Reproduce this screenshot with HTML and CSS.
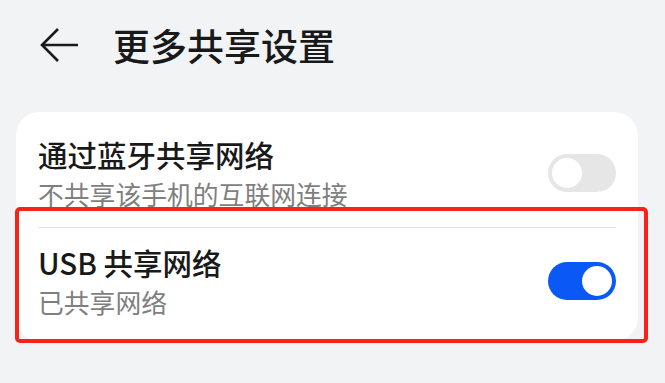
FILE: index.html
```html
<!DOCTYPE html>
<html lang="zh-CN">
<head>
    <meta charset="UTF-8">
    <title>更多共享设置</title>
    <link rel="stylesheet" href="styles.css">
</head>
<body>

<div class="header">
    <svg class="back" width="38" height="36" viewBox="0 0 38 36">
        <path d="M18 2 L2 18 L18 34 M2 18 H38" fill="none" stroke="#1a1a1a" stroke-width="2.6" stroke-linejoin="miter"/>
    </svg>
    <h1 class="title">更多共享设置</h1>
</div>

<div class="card">
    <div class="row first">
        <div class="texts">
            <div class="row-title">通过蓝牙共享网络</div>
            <div class="row-sub">不共享该手机的互联网连接</div>
        </div>
        <div class="toggle"><span class="knob"></span></div>
    </div>
    <div class="divider"></div>
    <div class="row second">
        <div class="texts">
            <div class="row-title">USB 共享网络</div>
            <div class="row-sub">已共享网络</div>
        </div>
        <div class="toggle on"><span class="knob"></span></div>
    </div>
</div>

<!-- annotation box -->
<div class="highlight"></div>

</body>
</html>
```

FILE: styles.css
```css
body {
    margin: 0;
    width: 665px;
    height: 383px;
    background-color: #f1f3f5;
    font-family: "Noto Sans CJK SC", "Noto Sans", sans-serif;
    color: #191919;
    position: relative;
    overflow: hidden;
}

.header {
    height: 90px;
    display: flex;
    align-items: center;
    padding-left: 40px;
    gap: 35px;
}

.back {
    display: block;
}

.title {
    margin: 0;
    font-size: 37px;
    font-weight: 500;
    line-height: 1;
}

.card {
    margin: 22px 0 0 16px;
    width: 622px;
    background-color: #ffffff;
    border-radius: 24px;
}

.row {
    display: flex;
    align-items: center;
    justify-content: space-between;
    padding: 0 22px;
}

.row.first {
    padding-top: 22px;
    padding-bottom: 15px;
}

.row.second {
    padding-top: 14px;
    padding-bottom: 21px;
}

.row-title {
    font-size: 29.5px;
    font-weight: 500;
    line-height: 40px;
}

.row-sub {
    margin-top: 2px;
    font-size: 25.8px;
    line-height: 36px;
    color: #7f7f7f;
}

.divider {
    height: 1px;
    margin: 0 22px;
    background-color: #e2e2e2;
}

.toggle {
    width: 68px;
    height: 38px;
    border-radius: 19px;
    background-color: #e6e6e6;
    display: flex;
    align-items: center;
    padding: 0 4px;
    box-sizing: border-box;
}

.toggle .knob {
    width: 30px;
    height: 30px;
    border-radius: 50%;
    background-color: #ffffff;
}

.toggle.on {
    background-color: #0a59f7;
    justify-content: flex-end;
}

.highlight {
    position: absolute;
    left: 15px;
    top: 207px;
    width: 633px;
    height: 136px;
    box-sizing: border-box;
    border: 4px solid #f5231b;
    border-radius: 5px;
}
```
